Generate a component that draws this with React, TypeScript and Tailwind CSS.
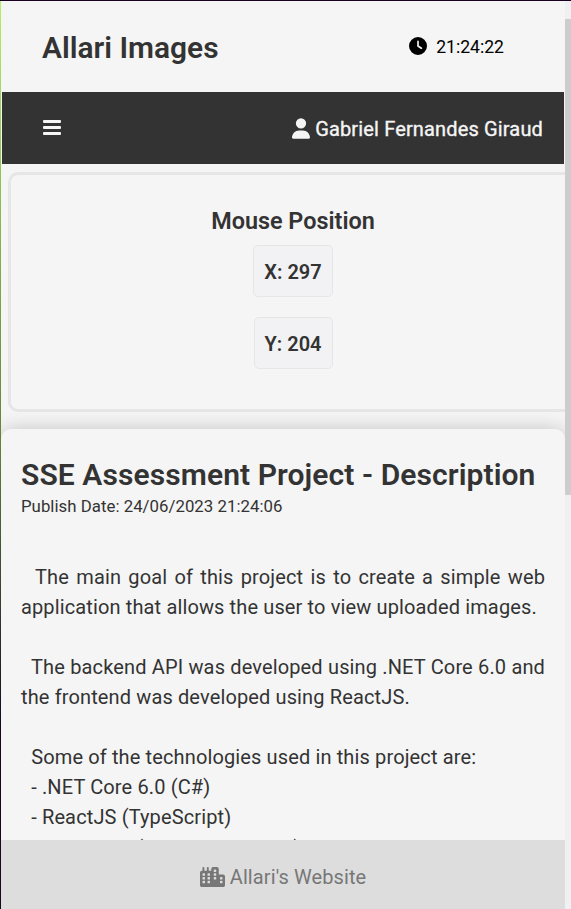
import { FaCity, FaClock, FaUser } from "react-icons/fa6";

function MenuIcon() {
  return (
    <svg viewBox="0 0 20 20" className="size-5" fill="currentColor" aria-hidden="true">
      <rect x="1" y="2" width="18" height="3" rx="1" />
      <rect x="1" y="8" width="18" height="3" rx="1" />
      <rect x="1" y="14" width="18" height="3" rx="1" />
    </svg>
  );
}

function Header() {
  return (
    <header className="flex h-[91px] shrink-0 items-center justify-between pl-10 pr-[61px] pt-px">
      <h1 className="mt-px text-[29.9px] font-semibold leading-[34px] text-[#333]">Allari Images</h1>
      <div className="flex items-center gap-[9px] text-black">
        <FaClock className="-mt-0.5 size-[18px]" />
        <span className="text-[17.6px] leading-5">21:24:22</span>
      </div>
    </header>
  );
}

function NavBar() {
  return (
    <nav className="mr-px flex h-[72px] shrink-0 items-center justify-between bg-[#333] pl-10 pr-[21px] text-[#f5f5f5]">
      <MenuIcon />
      <div className="flex items-center gap-[5px] pt-px">
        <FaUser className="h-[21px] w-[18px]" />
        <span className="text-[20px] leading-6 tracking-[0.15px] [-webkit-text-stroke:0.35px_#f5f5f5]">Gabriel Fernandes Giraud</span>
      </div>
    </nav>
  );
}

function Coordinate({ axis, value }: { axis: string; value: number }) {
  return (
    <div className="rounded-[5px] border border-[#e6e6e6] bg-[#f2f2f5] px-2.5 pb-3 pt-3.5 text-[20px] font-semibold leading-6">
      {axis}: {value}
    </div>
  );
}

function MousePosition() {
  return (
    <section className="ml-1.5 mt-2 flex h-60 w-[570px] shrink-0 flex-col items-center rounded-[10px] border-[3px] border-[#e6e6e6] pt-[33px] text-[#333]">
      <h2 className="mb-2.5 text-[23.4px] font-semibold leading-[27px]">Mouse Position</h2>
      <div className="flex flex-col items-center gap-5">
        <Coordinate axis="X" value={297} />
        <Coordinate axis="Y" value={204} />
      </div>
    </section>
  );
}

function Description() {
  return (
    <article className="-ml-px mt-[17px] h-[600px] w-[564px] shrink-0 rounded-[10px] bg-[#f5f5f5] px-5 pt-[29px] text-[#333] shadow-[0_0_20px_rgba(0,0,0,0.2)]">
      <h2 className="whitespace-nowrap text-[30px] font-semibold leading-[34px] tracking-[0.09px]">
        SSE Assessment Project - Description
      </h2>
      <p className="mt-1 text-[16.8px] leading-5 tracking-[0.03px]">Publish Date: 24/06/2023 21:24:06</p>
      <div className="mt-[46px] w-[524px] text-justify text-[20px] leading-[30px] tracking-[0.13px]">
        <p>&nbsp; The main goal of this project is to create a simple web application that allows the user to view uploaded images.</p>
        <p className="mt-[30px]">&nbsp; The backend API was developed using .NET Core 6.0 and the frontend was developed using ReactJS.</p>
        <p className="mt-[30px]">&nbsp; Some of the technologies used in this project are:</p>
        <p>&nbsp; - .NET Core 6.0 (C#)</p>
        <p>&nbsp; - ReactJS (TypeScript)</p>
        <p className="pt-px">
          &nbsp; - <span className="tracking-[-0.4px]">SQLServer</span>{" "}
          <span className="tracking-[0.65px]">(Azure Database)</span>
        </p>
      </div>
    </article>
  );
}

function Footer() {
  return (
    <footer className="z-10 flex h-[69px] shrink-0 items-center justify-center gap-[5px] bg-[#ddd] pt-1 text-[#777]">
      <FaCity className="h-5 w-[25px]" />
      <span className="text-[20px] leading-6 tracking-[0.1px]">Allari's Website</span>
    </footer>
  );
}

export default function App() {
  return (
    <div className="flex h-[909px] w-[571px] flex-col overflow-hidden bg-[#f5f5f5] font-[Roboto,sans-serif]">
      <div className="h-px shrink-0 bg-[#190020]" />
      <div className="flex min-h-0 flex-1">
        <div className="w-px shrink-0 bg-linear-to-b from-[#b5ef64] via-[#5e8038] via-50% to-[#17081f] to-80%" />
        <div className="flex w-[564px] shrink-0 flex-col overflow-hidden">
          <main className="flex min-h-0 flex-1 flex-col overflow-hidden pl-px">
            <Header />
            <NavBar />
            <MousePosition />
            <Description />
          </main>
          <Footer />
        </div>
        <div className="flex-1 bg-[#f0f0f3] pt-[18px]">
          <div className="h-[476px] bg-[#cdcdcd]" />
        </div>
      </div>
    </div>
  );
}
